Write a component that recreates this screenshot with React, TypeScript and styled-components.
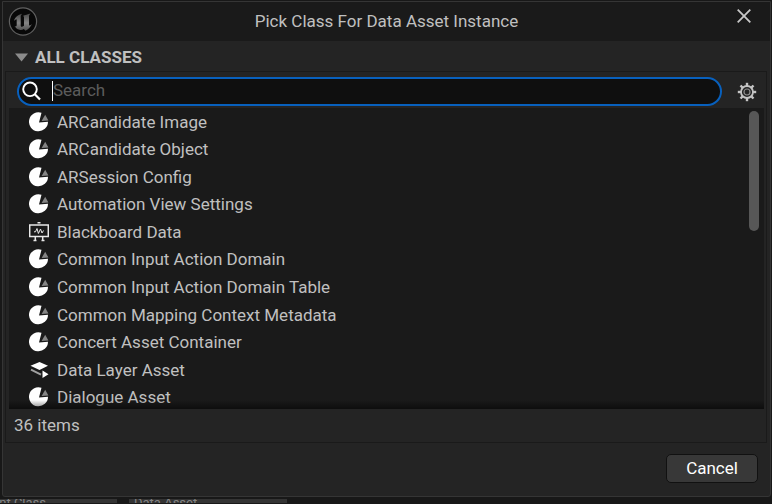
import React from "react";
import styled, { createGlobalStyle } from "styled-components";

const Global = createGlobalStyle`
  * { box-sizing: border-box; }
  body {
    margin: 0;
    background: #181818;
    color: #c0c0c0;
    font: 17px/20px Roboto, sans-serif;
  }
  button, input { font: inherit; color: inherit; }
`;

const Page = styled.div`
  display: flex;
  flex-direction: column;
  height: 100vh;
  overflow: hidden;
`;

const Dialog = styled.main`
  flex: 1;
  min-height: 0;
  display: flex;
  flex-direction: column;
  margin: 1px 1px 0 2px;
  border: 1px solid #353535;
  border-radius: 0 0 3px 3px;
  background: #242424;
`;

const TitleBar = styled.header`
  display: grid;
  grid-template-columns: 40px 1fr 40px;
  align-items: center;
  height: 39px;
  background: #1a1a1a;
`;

const Logo = styled.svg`
  width: 30px;
  height: 30px;
  margin-left: 5px;
`;

const Title = styled.h1`
  margin: 0;
  padding-bottom: 2px;
  font-size: 17px;
  font-weight: 400;
  text-align: center;
`;

const IconButton = styled.button`
  display: flex;
  align-items: center;
  justify-content: center;
  width: 24px;
  height: 24px;
  padding: 0;
  border: 0;
  background: none;
`;

const CloseButton = styled(IconButton)`
  align-self: start;
  margin: 2px 0 0 2px;
`;

const SectionToggle = styled.button`
  display: flex;
  align-items: center;
  gap: 7px;
  height: 30px;
  padding: 2px 12px 0;
  border: 0;
  background: none;
  font-weight: 700;
  text-align: left;
`;

const Panel = styled.section`
  flex: 1;
  min-height: 0;
  display: flex;
  flex-direction: column;
  margin: 0 3px 0 2px;
  border: 1px solid #1a1a1a;
`;

const SearchRow = styled.div`
  display: flex;
  align-items: center;
  gap: 13px;
  height: 36px;
  padding: 3px 7px 0 11px;
`;

const SearchBox = styled.label`
  flex: 1;
  display: flex;
  align-items: center;
  gap: 10px;
  height: 29px;
  padding: 0 5px 2px 3px;
  border: 2px solid #0860bd;
  border-radius: 15px;
  background: #0f0f0f;
`;

const Caret = styled.span`
  width: 1px;
  height: 20px;
  margin: 0 -10px 0 1px;
  background: #fff;
`;

const SearchInput = styled.input`
  flex: 1;
  min-width: 0;
  padding: 0 0 1px;
  border: 0;
  outline: 0;
  background: none;
  &::placeholder { color: #5c5c5c; opacity: 1; }
`;

const ListView = styled.div`
  position: relative;
  flex: 1;
  min-height: 0;
  display: flex;
  margin: 0 2px 0 3px;
  overflow: hidden;
  background: #1a1a1a;
  &::after {
    content: "";
    position: absolute;
    inset: auto 0 0;
    height: 9px;
    background: linear-gradient(transparent, rgba(0, 0, 0, 0.5));
  }
`;

const ClassList = styled.ul`
  flex: 1;
  display: grid;
  grid-auto-rows: 1fr;
  height: 303px;
  margin: 0;
  padding: 0;
  list-style: none;
`;

const ClassRow = styled.li`
  display: flex;
  align-items: center;
  gap: 8px;
  padding-left: 20px;
`;

const RowIcon = styled.svg`
  width: 20px;
  height: 20px;
  flex: none;
`;

const ScrollTrack = styled.div`
  width: 15px;
  padding: 3px 5px 0 0;
`;

const ScrollThumb = styled.div`
  width: 10px;
  height: 120px;
  border-radius: 5px;
  background: #575757;
`;

const Status = styled.p`
  margin: 0;
  height: 33px;
  padding: 6px 8px;
`;

const Footer = styled.footer`
  display: flex;
  justify-content: flex-end;
  padding: 11px 12px 13px;
`;

const CancelButton = styled.button`
  width: 92px;
  height: 29px;
  padding: 0 0 1px;
  border: 1px solid #111;
  border-radius: 5px;
  background: #383838;
  color: #fff;
`;

const AssetStrip = styled.div`
  display: flex;
  gap: 12px;
  height: 7px;
  padding: 2px 0 1px;
  overflow: hidden;
`;

const AssetCard = styled.div<{ $first?: boolean }>`
  display: flex;
  flex: 0 0 ${(p) => (p.$first ? 117 : 158)}px;
  justify-content: ${(p) => (p.$first ? "flex-end" : "flex-start")};
  padding: ${(p) => (p.$first ? "0 71px 0 0" : "0 0 0 5px")};
  overflow: hidden;
  background: #343434;
  color: #858585;
  font-size: 13px;
  line-height: 8px;
  white-space: nowrap;
`;

const PieIcon = () => (
  <RowIcon viewBox="0 0 20 20" aria-hidden="true">
    <path d="M12.5 .8A9.5 9.5 0 1 0 19 9.8L10 10.6Z" fill="#fff" />
    <path d="M16.2 2.8L19.4 8.6L12.6 9Z" fill="#858585" />
  </RowIcon>
);

const BoardIcon = () => (
  <RowIcon viewBox="0 0 20 20" aria-hidden="true" fill="none" stroke="#e8e8e8">
    <path d="M8.5 .7h3M6.3 15v3M13.7 15v3M4.5 18.5h3M12.5 18.5h3" strokeWidth="1.5" />
    <path d="M.7 3h18.6v11.5H.7z" strokeWidth="1.5" />
    <path d="M5 9.8h1.5L8 6.5l1.4 5L11.5 7l1.5 4L14.5 8.5" strokeWidth="1" />
  </RowIcon>
);

const LayersIcon = () => (
  <RowIcon viewBox="0 0 20 20" aria-hidden="true">
    <path d="M1.5 5.7L10.5 2l8.5 3.7-8.5 4.2Z" fill="#fff" />
    <path d="M2 9.6L12 14.6" stroke="#a0a0a0" strokeWidth="2" />
    <path d="M13.5 10.5v7.5l6-3.8Z" fill="#fff" />
  </RowIcon>
);

const icons = { pie: PieIcon, board: BoardIcon, layers: LayersIcon };

const classes: { name: string; icon: keyof typeof icons }[] = [
  { name: "ARCandidate Image", icon: "pie" },
  { name: "ARCandidate Object", icon: "pie" },
  { name: "ARSession Config", icon: "pie" },
  { name: "Automation View Settings", icon: "pie" },
  { name: "Blackboard Data", icon: "board" },
  { name: "Common Input Action Domain", icon: "pie" },
  { name: "Common Input Action Domain Table", icon: "pie" },
  { name: "Common Mapping Context Metadata", icon: "pie" },
  { name: "Concert Asset Container", icon: "pie" },
  { name: "Data Layer Asset", icon: "layers" },
  { name: "Dialogue Asset", icon: "pie" },
];

const teeth = [0, 45, 90, 135, 180, 225, 270, 315];

export default function App() {
  return (
    <Page>
      <Global />
      <Dialog role="dialog" aria-labelledby="dialog-title">
        <TitleBar>
          <Logo viewBox="0 0 30 30" aria-hidden="true">
            <defs>
              <linearGradient id="metal" x1="0" y1="0" x2="0" y2="1">
                <stop offset="0" stopColor="#484848" />
                <stop offset=".55" stopColor="#858585" />
                <stop offset="1" stopColor="#4c4c4c" />
              </linearGradient>
            </defs>
            <circle cx="15" cy="14.5" r="13.6" fill="#080808" stroke="#606060" strokeWidth="1.2" />
            <path
              d="M6 14C7 10 10 8 14 6.8L12.7 8.8V18.5C12.7 20 14.2 20.3 16 18.8V10.5C16 9.5 15.5 9 14.8 9C17 8.2 20 7.2 22.7 6.5C21.5 7.6 21 8.3 21 9.3V17.8C21 19 22 18.7 24 17C22.5 20 20.5 22.2 17.5 23.8L15.8 22C14.5 23 13 23.2 11.5 22.8C9 22.2 7.8 21 6.6 19C7.9 19.8 8.7 19.3 8.7 18V12.8C8.7 11.4 7.3 12.4 6 14Z"
              fill="url(#metal)"
            />
          </Logo>
          <Title id="dialog-title">Pick Class For Data Asset Instance</Title>
          <CloseButton aria-label="Close">
            <svg width="14" height="14" viewBox="0 0 14 14">
              <path d="M.7 .7L13.3 13.3M13.3 .7L.7 13.3" stroke="#c8c8c8" strokeWidth="1.8" />
            </svg>
          </CloseButton>
        </TitleBar>
        <SectionToggle aria-expanded="true">
          <svg width="13" height="9" viewBox="0 0 13 9" aria-hidden="true">
            <path d="M0 .5H13L6.5 8.5Z" fill="#8c8c8c" />
          </svg>
          ALL CLASSES
        </SectionToggle>
        <Panel>
          <SearchRow>
            <SearchBox>
              <svg width="19" height="20" viewBox="0 0 19 20" fill="none" stroke="#fff" aria-hidden="true">
                <circle cx="8" cy="8.3" r="6.8" strokeWidth="1.9" />
                <path d="M12.8 13.2L18 18.5" strokeWidth="2.2" />
              </svg>
              <Caret />
              <SearchInput type="text" placeholder="Search" aria-label="Search" />
            </SearchBox>
            <IconButton aria-label="Settings">
              <svg width="20" height="20" viewBox="0 0 20 20" fill="none" stroke="#c4c4c4">
                {teeth.map((a) => (
                  <path key={a} d="M10 .8V4.5" strokeWidth="2.4" transform={`rotate(${a} 10 10)`} />
                ))}
                <circle cx="10" cy="10" r="6" strokeWidth="1.8" />
                <circle cx="10" cy="10" r="3" strokeWidth="1.2" stroke="#8c8c8c" />
              </svg>
            </IconButton>
          </SearchRow>
          <ListView>
            <ClassList>
              {classes.map(({ name, icon }) => {
                const Icon = icons[icon];
                return (
                  <ClassRow key={name}>
                    <Icon />
                    {name}
                  </ClassRow>
                );
              })}
            </ClassList>
            <ScrollTrack>
              <ScrollThumb />
            </ScrollTrack>
          </ListView>
          <Status>36 items</Status>
        </Panel>
        <Footer>
          <CancelButton>Cancel</CancelButton>
        </Footer>
      </Dialog>
      <AssetStrip>
        <AssetCard $first>int Class</AssetCard>
        <AssetCard>Data Asset</AssetCard>
      </AssetStrip>
    </Page>
  );
}
